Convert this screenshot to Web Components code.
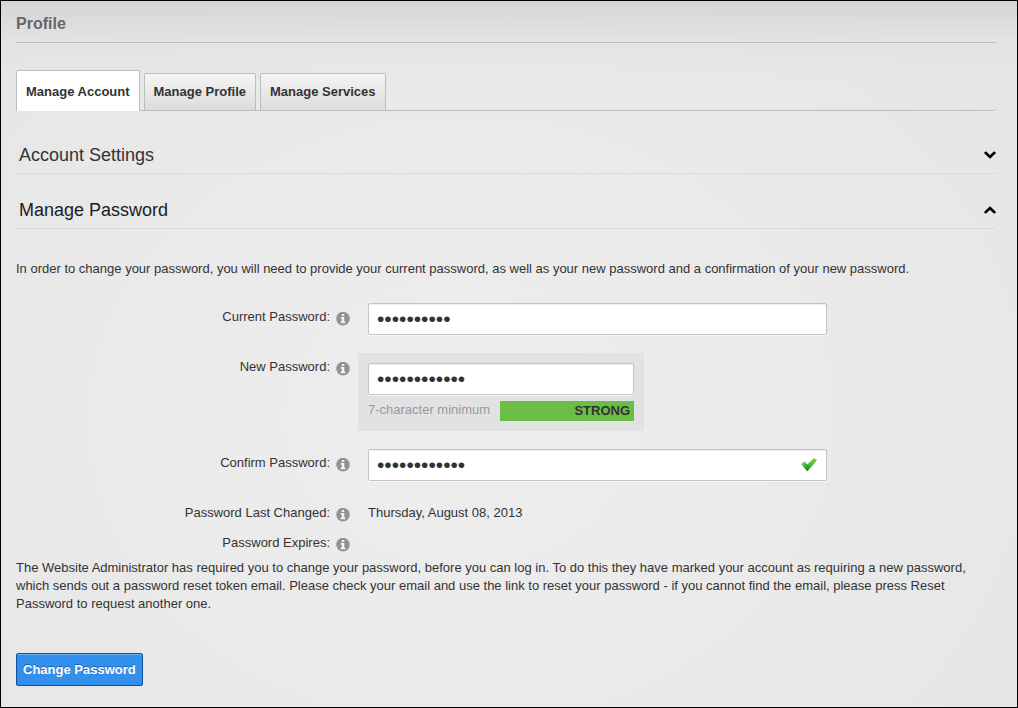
<!DOCTYPE html>
<html lang="en">
<head>
<meta charset="utf-8">
<meta name="viewport" content="width=device-width, initial-scale=1">
<title>Profile</title>
<style>
  body {
    margin: 0;
    font: 13px/18px "Liberation Sans", Arial, sans-serif;
    color: #333;
    --line: #bdbdbd;
    --line-soft: #dadada;
    --label-column: 334px;
  }
</style>
</head>
<body>
<profile-page heading="Profile">
  <tab-bar>
    <tab-item selected>Manage Account</tab-item>
    <tab-item>Manage Profile</tab-item>
    <tab-item>Manage Services</tab-item>
  </tab-bar>
  <fold-section heading="Account Settings"></fold-section>
  <fold-section heading="Manage Password" open>
    <password-form></password-form>
  </fold-section>
</profile-page>

<script>
class BaseElement extends HTMLElement {
  connectedCallback() {
    if (this.shadowRoot) return;
    this.attachShadow({ mode: "open" }).innerHTML = this.render();
    this.ready();
  }
  ready() {}
}

class ProfilePage extends BaseElement {
  render() {
    return `
      <style>
        :host {
          display: block; box-sizing: border-box; min-height: 100vh;
          padding: 13px 21px 21px 15px; border: 1px solid #000;
          background:
            linear-gradient(rgba(210, 208, 210, .8), rgba(224, 224, 224, .5) 40px, rgba(232, 232, 232, 0) 80px),
            radial-gradient(ellipse 660px 540px at 460px 420px, #eee, #e6e6e6);
        }
        h1 {
          margin: 0 0 27px; padding-bottom: 8px;
          border-bottom: 1px solid var(--line);
          font-size: 16px; line-height: 20px; color: #666;
        }
      </style>
      <h1>${this.getAttribute("heading")}</h1>
      <slot></slot>`;
  }
}

class TabBar extends BaseElement {
  render() {
    return `
      <style>
        :host {
          display: flex; align-items: flex-end; gap: 4px; margin-bottom: 32px;
          box-shadow: inset 0 -1px var(--line); border-bottom-right-radius: 3px;
        }
      </style>
      <slot></slot>`;
  }
  ready() {
    this.setAttribute("role", "tablist");
    this.addEventListener("click", (e) => {
      const tab = e.target.closest("tab-item");
      if (tab) for (const t of this.children) t.toggleAttribute("selected", t === tab);
    });
  }
}

class TabItem extends BaseElement {
  render() {
    return `
      <style>
        :host { display: block; }
        button {
          display: block; box-sizing: border-box; height: 38px; margin: 0; padding: 0 9px;
          border: 1px solid var(--line); border-radius: 2px 2px 0 0;
          background: linear-gradient(#f4f4f4, #dcdcdc);
          font: bold 13px/18px "Liberation Sans", Arial, sans-serif; color: #333;
          cursor: pointer;
        }
        :host([selected]) button {
          height: 41px; border-bottom: 0; background: #fff; padding-top: 2px;
        }
      </style>
      <button type="button" role="tab"><slot></slot></button>`;
  }
}

class FoldSection extends BaseElement {
  render() {
    return `
      <style>
        :host { display: block; margin-bottom: 24px; }
        :host([open]) { margin-bottom: 0; }
        h2 { margin: 0; border-bottom: 1px solid var(--line-soft); font-weight: normal; }
        button {
          display: flex; justify-content: space-between; align-items: center;
          width: 100%; margin: 0; padding: 0 0 6px 3px; border: 0; background: none;
          font: 18px/24px "Liberation Sans", Arial, sans-serif; color: #333;
          text-align: left; cursor: pointer;
        }
        svg { width: 12px; height: 8px; }
        :host([open]) button { color: #1c1c1c; }
        :host([open]) svg { transform: rotate(180deg); }
        .body { display: none; }
        :host([open]) .body { display: block; padding-top: 31px; }
      </style>
      <h2><button type="button">
        <span>${this.getAttribute("heading")}</span>
        <svg viewBox="0 0 12 8" aria-hidden="true"><path d="M1.6 1.8 6 6 10.4 1.8" fill="none" stroke="#000" stroke-width="2.6" stroke-linecap="round" stroke-linejoin="miter"/></svg>
      </button></h2>
      <div class="body"><slot></slot></div>`;
  }
  ready() {
    this.shadowRoot.querySelector("button").addEventListener("click", () => this.toggleAttribute("open"));
  }
}

class InfoIcon extends BaseElement {
  render() {
    return `
      <style>
        :host { display: block; width: 14px; height: 14px; }
        svg { display: block; width: 14px; height: 14px; }
      </style>
      <svg viewBox="0 0 14 14" aria-hidden="true">
        <circle cx="7" cy="6.6" r="6.8" fill="#929292"/>
        <path d="M5.9 2h2.3v2.1H5.9zM4.8 5.1h3.5v4.5h1v1.6H4.7V9.6h1.1V6.7h-1z" fill="#f4f4f4"/>
      </svg>`;
  }
}

class FormRow extends BaseElement {
  render() {
    const control = this.hasAttribute("value");
    const tag = control ? "label" : "span";
    return `
      <style>
        :host {
          display: grid; grid-template-columns: var(--label-column) minmax(0, 1fr);
          column-gap: 18px; align-items: start; margin-bottom: 18px;
        }
        :host([text]) { margin-bottom: 0; padding-bottom: 7px; }
        .name { display: flex; justify-content: flex-end; align-items: flex-start; gap: 6px; padding-top: 5px; }
        info-icon { margin-top: 4px; }
        .text { padding-top: 5px; }
        .wide { position: relative; max-width: 459px; }
        .panel { box-sizing: border-box; max-width: 286px; margin-left: -10px; padding: 10px; background: #e2e2e4; }
        input {
          display: block; box-sizing: border-box; width: 100%; height: 32px; margin: 0; padding: 0 8px;
          border: 1px solid #c4c4c4; border-radius: 2px; outline: 0; background: #fff;
          box-shadow: inset 0 1px 1px #eee, 0 1px #f8f8f8;
          font: 21px/24px "Liberation Sans", Arial, sans-serif; color: #333;
        }
        .tick { position: absolute; top: 8px; right: 10px; width: 16px; height: 15px; }
        .strength { display: flex; justify-content: space-between; margin-top: 6px; color: #999; white-space: nowrap; }
        .meter { flex: 0 1 130px; padding: 1px 4px 1px 0; background: #6abd45; color: #333; font-weight: bold; text-align: right; }
      </style>
      <div class="name"><${tag}${control ? ' for="field"' : ""}>${this.getAttribute("label")}</${tag}><info-icon></info-icon></div>
      ${control ? this.control() : `<div class="text">${this.getAttribute("text")}</div>`}`;
  }
  control() {
    const input = `<input id="field" type="password" value="${this.getAttribute("value")}">`;
    const strength = this.getAttribute("strength");
    if (strength) {
      return `<div class="panel">${input}
        <div class="strength"><span>7-character minimum</span><span class="meter">${strength}</span></div>
      </div>`;
    }
    const tick = `
      <svg class="tick" viewBox="0 0 16 15" aria-hidden="true">
        <defs>
          <linearGradient id="g" x1="0" y1="0" x2="0.7" y2="1">
            <stop offset="0" stop-color="#b4e8b4"/><stop offset=".5" stop-color="#2fb53a"/><stop offset="1" stop-color="#128a2c"/>
          </linearGradient>
          <linearGradient id="h" x1="1" y1="0" x2="0" y2="1">
            <stop offset="0" stop-color="#8ad62a"/><stop offset="1" stop-color="#17a033"/>
          </linearGradient>
        </defs>
        <path d="M.4 7 3.4 4.6 6.2 7.4 13 .9 15.8 3.2 6.4 14.2Z" fill="url(#h)"/>
        <path d="M.4 7 3.4 4.6 6.4 7.6 8.2 9.6 6.4 14.2Z" fill="url(#g)"/>
        <path d="M15.6 3.2 6.4 14 3.6 10.8" fill="none" stroke="#2a8a2a" stroke-width=".7" opacity=".6"/>
      </svg>`;
    return `<div class="wide">${input}${this.hasAttribute("valid") ? tick : ""}</div>`;
  }
}

class PasswordForm extends BaseElement {
  render() {
    return `
      <style>
        :host { display: block; }
        p { margin: 0; }
        .intro { margin-bottom: 25px; }
        button {
          display: block; box-sizing: border-box; height: 33px; margin: 40px 0 0; padding: 0 6px;
          border: 1px solid #0f5296; border-radius: 2px; background: #338fec;
          box-shadow: inset 0 1px #6db2f4;
          font: bold 13px/18px "Liberation Sans", Arial, sans-serif; color: #fff;
          text-shadow: 0 -1px rgba(0, 50, 110, .5); cursor: pointer;
        }
      </style>
      <form>
        <p class="intro">In order to change your password, you will need to provide your current password, as well as your new password and a confirmation of your new password.</p>
        <form-row label="Current Password:" value="abcdefghij"></form-row>
        <form-row label="New Password:" value="abcdefghijkl" strength="STRONG"></form-row>
        <form-row label="Confirm Password:" value="abcdefghijkl" valid></form-row>
        <form-row label="Password Last Changed:" text="Thursday, August 08, 2013"></form-row>
        <form-row label="Password Expires:" text=""></form-row>
        <p>The Website Administrator has required you to change your password, before you can log in. To do this they have marked your account as requiring a new password, which sends out a password reset token email. Please check your email and use the link to reset your password - if you cannot find the email, please press Reset Password to request another one.</p>
        <button type="button">Change Password</button>
      </form>`;
  }
}

customElements.define("info-icon", InfoIcon);
customElements.define("form-row", FormRow);
customElements.define("password-form", PasswordForm);
customElements.define("tab-item", TabItem);
customElements.define("tab-bar", TabBar);
customElements.define("fold-section", FoldSection);
customElements.define("profile-page", ProfilePage);
</script>
</body>
</html>
